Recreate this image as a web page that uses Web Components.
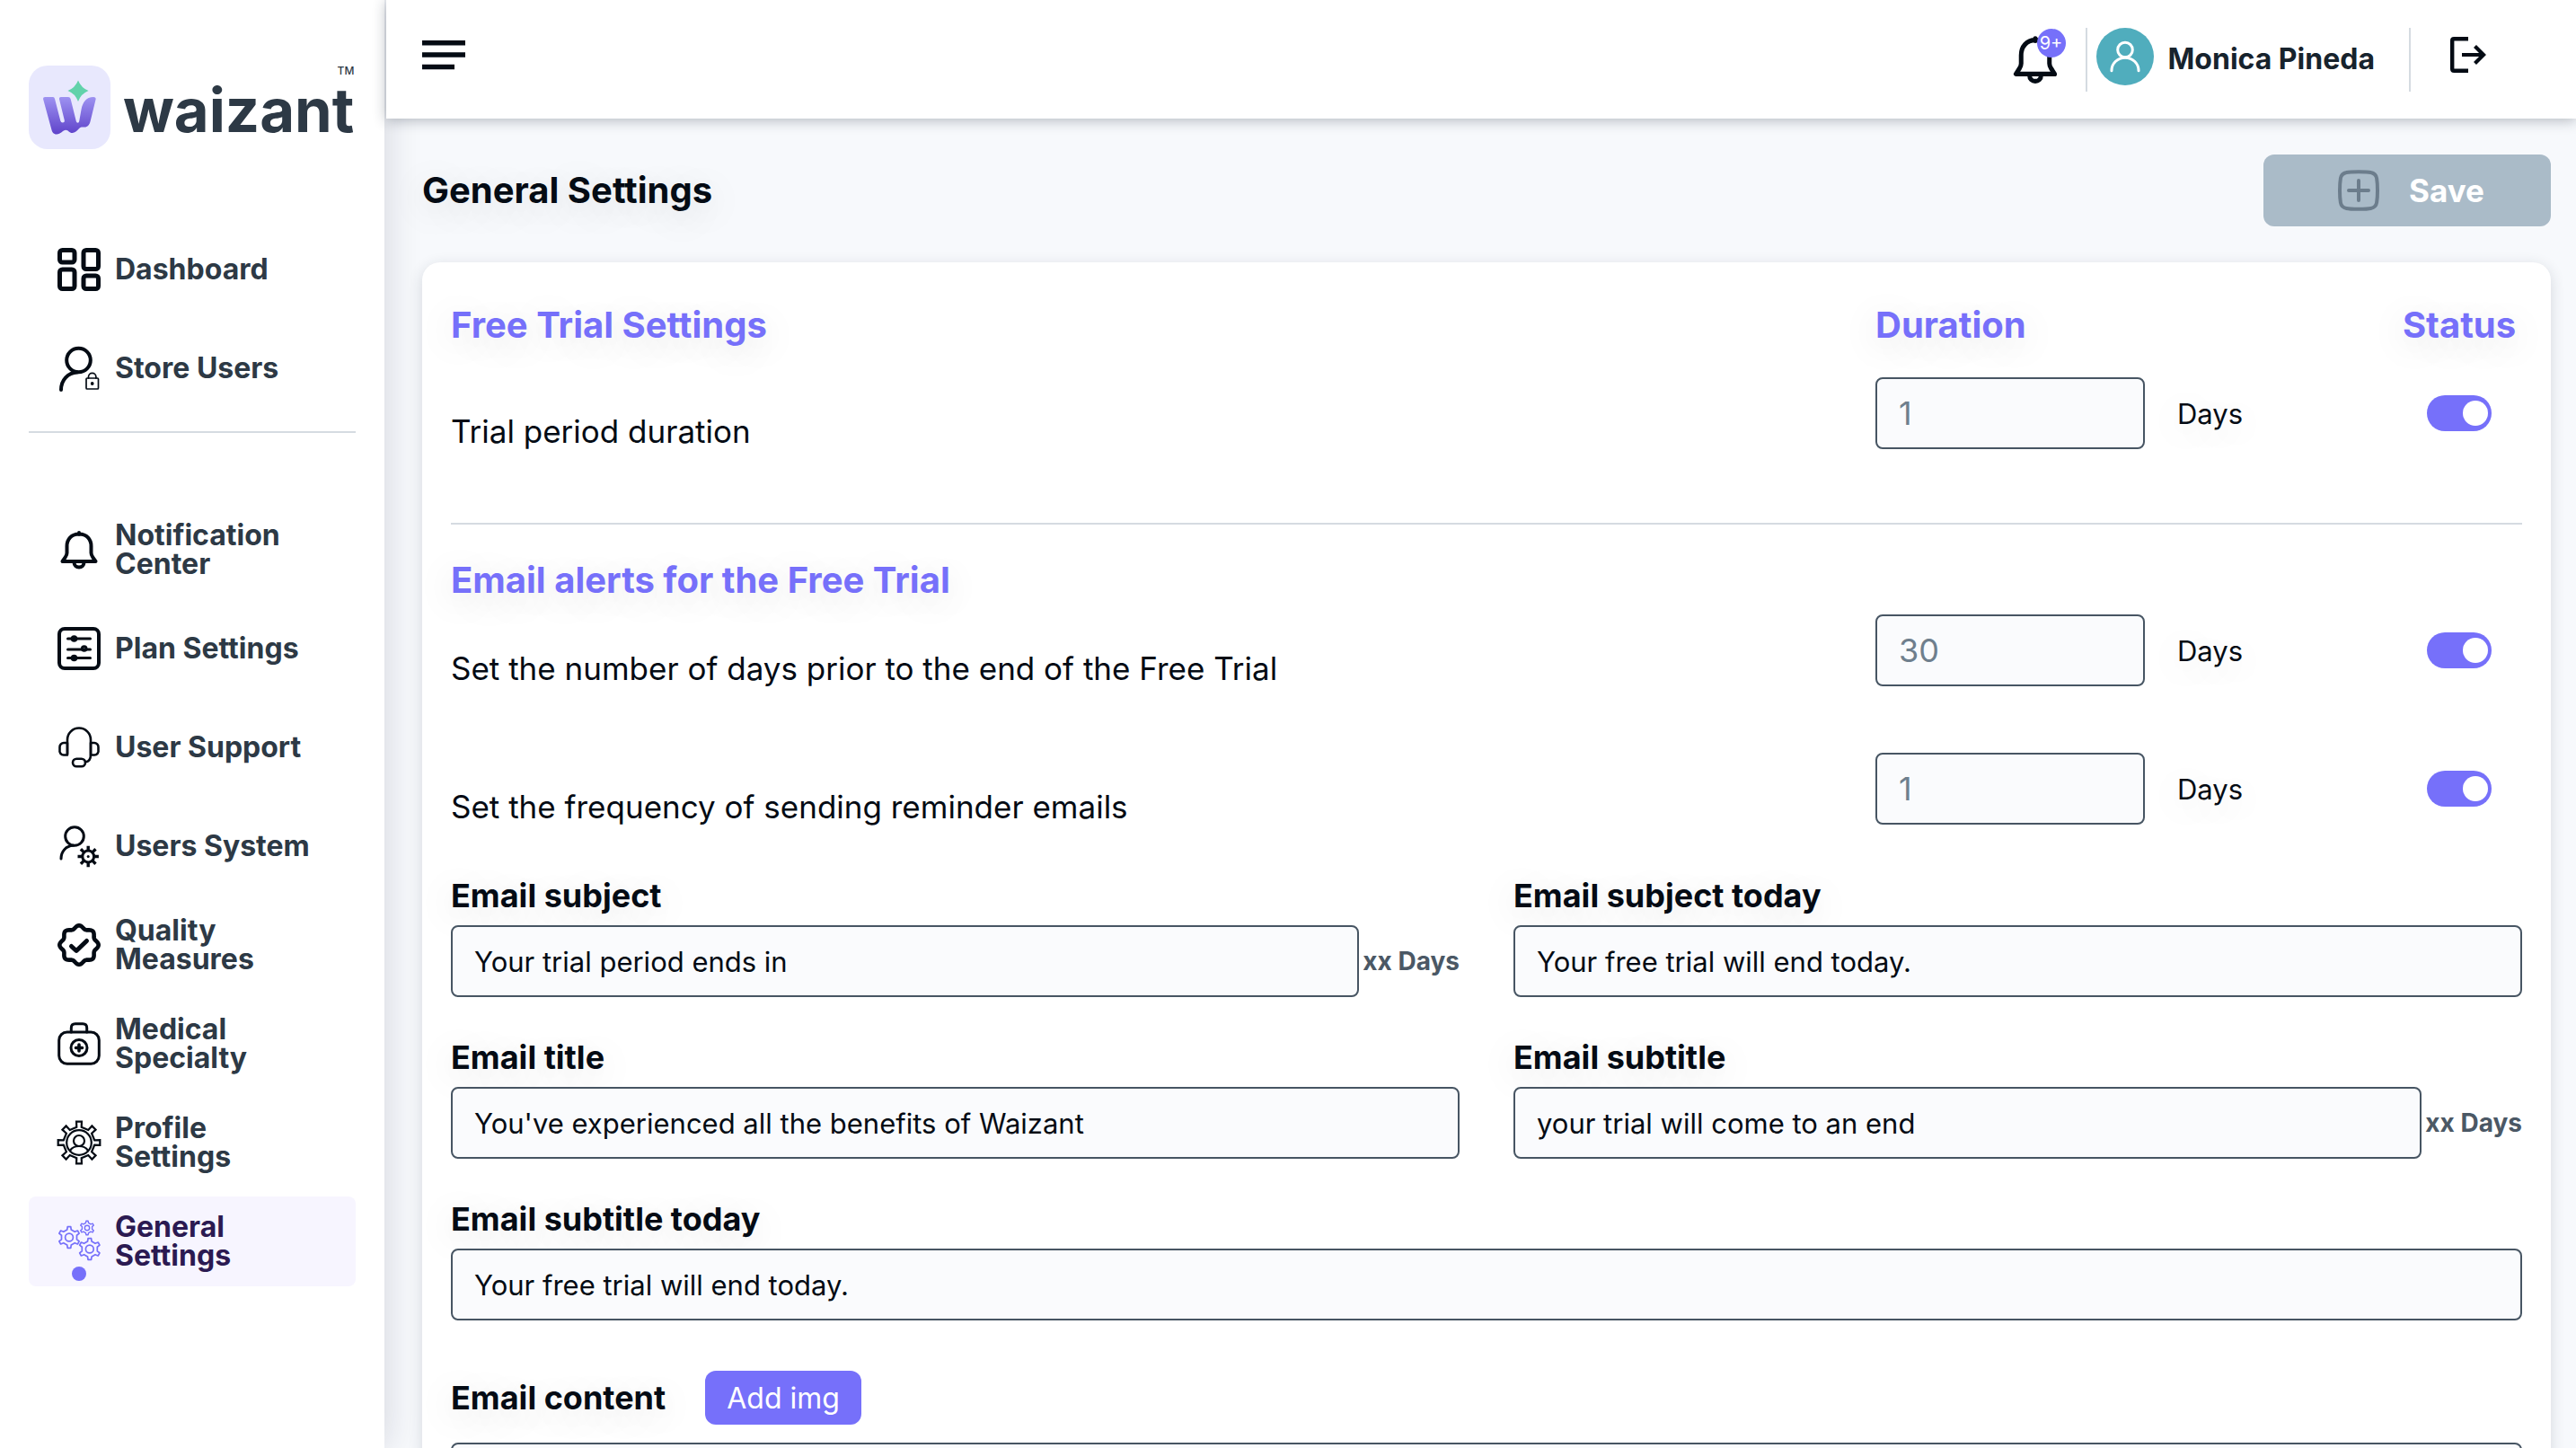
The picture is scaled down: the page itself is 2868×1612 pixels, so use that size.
<!DOCTYPE html>
<html lang="en">
<head>
<meta charset="utf-8">
<title>Waizant - General Settings</title>
<style>
  html, body { margin: 0; height: 100%; }
  body {
    font-family: Inter, "Liberation Sans", sans-serif;
    color: #040b14;
    background: #f7f9fc;
    --accent: #7670fa;
    --ink: #040b14;
    --slate: #2d3945;
    --line: #d5dbe1;
    --glow: 0 8px 40px rgba(0, 0, 0, .15);
  }
</style>
</head>
<body>
<waizant-app></waizant-app>

<script>
/* Outline of a cog: flat teeth around a centre point. */
function cog(cx, cy, teeth, outer, inner, top, foot) {
  const step = Math.PI * 2 / teeth, pts = [];
  for (let i = 0; i < teeth; i++) {
    const a = i * step - Math.PI / 2;
    [[inner, -foot], [outer, -top], [outer, top], [inner, foot]].forEach(([r, o]) => {
      pts.push((cx + r * Math.cos(a + o * step)).toFixed(2) + ' ' + (cy + r * Math.sin(a + o * step)).toFixed(2));
    });
  }
  return 'M' + pts.join('L') + 'Z';
}

/* Outline of a scalloped seal. */
function seal(cx, cy, waves, r, depth) {
  const pts = [];
  for (let i = 0; i < 96; i++) {
    const a = i / 96 * Math.PI * 2, k = r + depth * Math.cos(a * waves);
    pts.push((cx + k * Math.cos(a)).toFixed(2) + ' ' + (cy + k * Math.sin(a)).toFixed(2));
  }
  return 'M' + pts.join('L') + 'Z';
}

const bell = '<path d="M24 5v2M24 6.500C15.500 6.500 10.500 12.500 10.500 20v7.500c0 2-.8 3.400-1.800 4.800L5.500 37h37l-3.200-4.700c-1-1.400-1.800-2.800-1.800-4.800V20C37.500 12.500 32.500 6.500 24 6.500z"/><path d="M18.500 38c0 3.500 2.500 5.500 5.500 5.500s5.500-2 5.500-5.500"/>';

const ICONS = {
  dashboard: '<g stroke-width="5"><rect x="2.500" y="2.500" width="16.500" height="13.500" rx="3"/><rect x="29" y="2.500" width="16.500" height="21" rx="3"/><rect x="2.500" y="24" width="16.500" height="21.500" rx="3"/><rect x="29" y="31" width="16.500" height="14.500" rx="3"/></g>',
  store: '<g stroke-width="4"><circle cx="23.500" cy="15" r="13.300"/><path d="M4 48c0-11 7.500-19 18-19.500"/></g><g stroke-width="1.700"><rect x="32" y="35" width="13.500" height="12" rx="1"/><path d="M34.500 35v-1.500a4.200 4.200 0 0 1 8.400 0V35"/></g><circle cx="38.700" cy="41" r="1.900" fill="currentColor" stroke="none"/>',
  bell: '<g stroke-width="4">' + bell + '</g>',
  plan: '<rect x="2" y="2" width="44" height="44" rx="6" stroke-width="4"/><g stroke-width="3"><path d="M11.500 13h25M11.500 25h25M11.500 34.500h25"/></g><g stroke-width="3"><circle cx="18.500" cy="13" r="2.300"/><circle cx="29.700" cy="24" r="2.300"/><circle cx="18.500" cy="34.500" r="2.300"/></g>',
  support: '<g stroke-width="2.600"><path d="M11 31V15.500a13 13 0 0 1 26 0V31"/><path d="M11 19H7a4.500 4.500 0 0 0-4.500 4.500v3.500A4.500 4.500 0 0 0 7 32.500h4zM37 19h4a4.500 4.500 0 0 1 4.500 4.500v3.500a4.500 4.500 0 0 1-4.500 5.500h-4z"/><path d="M37 32c0 5-2 8-6 8.300"/><rect x="17" y="36.700" width="14" height="8.600" rx="4.300"/></g>',
  system: '<g stroke-width="3"><circle cx="19" cy="13" r="10.300"/><path d="M4 38c0-8.500 5.500-14.200 13.500-14.700"/></g><circle cx="34.200" cy="35.500" r="6.400" stroke-width="3"/><path stroke-width="3.400" stroke-linecap="butt" d="M34.200 28.500v-4.700M34.200 42.500v4.700M27.200 35.500h-4.700M41.200 35.500h4.700M29.300 30.600l-3.400-3.400M39.100 40.400l3.400 3.400M29.300 40.400l-3.400 3.400M39.100 30.600l3.400-3.400"/><circle cx="34.200" cy="35.500" r="1.500" fill="currentColor" stroke="none"/>',
  quality: '<path stroke-width="4.600" d="' + seal(24, 24, 8, 20, 1.7) + '"/><path stroke-width="5" d="M15.500 25.500l5.500 5 11.500-11"/>',
  medical: '<g stroke-width="3"><rect x="1.700" y="11" width="44.600" height="35.300" rx="9"/><path d="M15.300 11V6.500c0-3 1.500-4.700 4.500-4.700h8.400c3 0 4.500 1.700 4.500 4.700V11"/><circle cx="24" cy="28.500" r="9"/></g><path stroke-width="3.600" d="M24 25v7M20.500 28.500h7"/>',
  profile: '<g stroke-width="2.200" stroke-linejoin="miter"><path d="' + cog(24, 24, 8, 23.5, 17.4, .16, .2) + '"/><circle cx="24" cy="24" r="13.800"/><circle cx="24" cy="22" r="6"/><path d="M14 33c2-3.500 5.500-5 10-5s8 1.500 10 5"/></g>',
  general: '<g stroke-width="1.700"><path d="' + cog(13, 19.5, 6, 12, 8.8, .14, .25) + '"/><circle cx="13" cy="19.500" r="4.400"/><path d="' + cog(35.8, 32.5, 6, 12, 8.800, .14, .25) + '"/><circle cx="35.800" cy="32.500" r="4.400"/></g><g stroke-width="1.400"><path d="' + cog(33, 9, 6, 7.8, 5.8, .14, .25) + '"/><circle cx="33" cy="9" r="2.700"/></g>',
  menu: '<path stroke="none" fill="currentColor" d="M0 8h48v5.500H0zM0 21.300h48v5.500H0zM0 34.700h36v5.500H0z"/>',
  alerts: '<g stroke-width="4.300" transform="translate(0 -2) scale(1 1.060)">' + bell + '</g>',
  person: '<g stroke-width="3.800"><circle cx="24" cy="14.500" r="10.500"/><path d="M5 44C5 34 13 25.500 24 25.500S43 34 43 44"/></g>',
  logout: '<path stroke-width="4.400" stroke-linecap="butt" stroke-linejoin="round" d="M24 6.200H8.200q-2 0-2 2v31.600q0 2 2 2H24"/><path stroke-width="4" stroke-linecap="butt" stroke-linejoin="miter" d="M17 24h24"/><path stroke-width="4.200" stroke-linecap="butt" stroke-linejoin="miter" d="M31.500 14.500l9.500 9.500-9.500 9.500"/>',
  plus: '<path stroke-width="4" d="M24 3.200c6 0 11 .2 13.500.8 4 .8 6 2.800 6.600 6.500.5 3 .9 8 .9 13.500s-.4 10.500-.9 13.500c-.6 3.700-2.600 5.700-6.600 6.500-2.500.6-7.500.8-13.500.8s-11-.2-13.500-.8c-4-.8-6-2.800-6.600-6.500C3.400 34.500 3 29.500 3 24s.4-10.500.9-13.500C4.500 6.800 6.500 4.800 10.500 4c2.500-.6 7.500-.8 13.500-.8z"/><path stroke-width="4" d="M24 13v22M13 24h22"/>'
};

function define(name, html, setup) {
  const template = document.createElement('template');
  template.innerHTML = '<style>*{box-sizing:border-box}</style>' + html;
  customElements.define(name, class extends HTMLElement {
    connectedCallback() {
      if (this.shadowRoot) return;
      this.attachShadow({ mode: 'open' }).append(template.content.cloneNode(true));
      if (setup) setup(this.shadowRoot, this);
    }
  });
}

define('ui-icon', `
<style>
  :host { display: block; width: 48px; height: 48px; flex: none; }
  svg { display: block; width: 100%; height: 100%; overflow: visible; }
</style>
<svg viewBox="0 0 48 48" fill="none" stroke="currentColor" stroke-linecap="round" stroke-linejoin="round" aria-hidden="true"></svg>`,
(root, el) => { root.querySelector('svg').innerHTML = ICONS[el.getAttribute('name')]; });

define('brand-logo', `
<style>
  :host { display: block; }
  a { display: flex; gap: 13px; height: 94px; color: var(--slate); text-decoration: none; }
  svg { width: 92px; height: 94px; flex: none; }
  .name { display: flex; flex-direction: column; align-items: flex-end; }
  sup { font-size: 12px; line-height: 12px; font-weight: 500; }
  b { font-size: 67px; line-height: 76px; font-weight: 700; }
</style>
<a href="#">
  <svg viewBox="0 0 92 94" aria-hidden="true">
    <defs><linearGradient id="fade" x1="0" y1="0" x2="0" y2="1"><stop offset="0" stop-color="#9d92f1"/><stop offset="1" stop-color="#5f43ca"/></linearGradient></defs>
    <rect width="91" height="93" rx="21" fill="#e8e8fd"/>
    <path fill="url(#fade)" d="M16 37q0-2 2-2h9q1.500 0 2 2l6.300 24.500q.5 2 2.400 2 2.400 0 2.100-2.500L34 37.500q-.4-2.500 1.800-2.500H44q2 0 2.600 2l6.200 25q.4 1.700 1.800 1.700 1.300 0 1.600-1.700l2.300-13C60 41 64 35 72 35q3 0 2.600 2.500l-6 24.500c-1 4-3 6.500-6.500 6.500-2.600 0-4.100-.5-6 1.500-2.600 2.700-4.600 5-7.600 5-3.500 0-4.300-3.300-7.300-3.300-3.200 0-5.700 4.800-10.200 4.800-3.500 0-5-2.500-5.700-5.500z"/>
    <path fill="#61d2aa" d="M55 16.500q3.500 8.500 11.500 11.500-8 3-11.500 12-3.500-9-11.500-12 8-3 11.500-11.500z"/>
  </svg>
  <span class="name"><sup>TM</sup><b>waizant</b></span>
</a>`);

define('nav-item', `
<style>
  :host { display: block; }
  a {
    display: flex; align-items: center; gap: 16px; position: relative;
    height: 100px; padding: 0 44px 0 32px; border-radius: 8px;
    color: var(--slate); text-decoration: none;
    font-size: 32px; line-height: 32px; font-weight: 700;
  }
  ui-icon { color: var(--ink); }
  :host([active]) a { background: #f7f5ff; color: #2b1a52; }
  :host([active]) ui-icon { color: var(--accent); }
  :host([active]) a::after {
    content: ""; position: absolute; left: 48px; bottom: 6px;
    width: 16px; height: 16px; border-radius: 50%; background: var(--accent);
  }
</style>
<a href="#"><ui-icon></ui-icon><span><slot></slot></span></a>`,
(root, el) => {
  const icon = document.createElement('ui-icon');
  icon.setAttribute('name', el.getAttribute('icon'));
  root.querySelector('ui-icon').replaceWith(icon);
  if (el.hasAttribute('active')) root.querySelector('a').setAttribute('aria-current', 'page');
});
</script>

<script>
define('side-bar', `
<style>
  :host { display: flex; flex-direction: column; background: #fff; padding: 73px 32px 0; box-shadow: 0 0 40px rgba(20, 20, 50, .16); }
  nav { display: flex; flex-direction: column; gap: 10px; margin-top: 83px; }
  hr { width: 100%; height: 2px; border: 0; margin: 10px 0 70px; background: var(--line); }
</style>
<brand-logo></brand-logo>
<nav aria-label="Main">
  <nav-item icon="dashboard">Dashboard</nav-item>
  <nav-item icon="store">Store Users</nav-item>
  <hr>
  <nav-item icon="bell">Notification Center</nav-item>
  <nav-item icon="plan">Plan Settings</nav-item>
  <nav-item icon="support">User Support</nav-item>
  <nav-item icon="system">Users System</nav-item>
  <nav-item icon="quality">Quality Measures</nav-item>
  <nav-item icon="medical">Medical Specialty</nav-item>
  <nav-item icon="profile">Profile Settings</nav-item>
  <nav-item icon="general" active>General Settings</nav-item>
</nav>`);

define('top-bar', `
<style>
  :host {
    display: flex; align-items: flex-start; justify-content: space-between;
    height: 132px; padding: 31px 96px 0 40px; background: #fff;
    box-shadow: 0 2px 14px rgba(30, 45, 60, .32);
  }
  button { display: block; position: relative; border: 0; padding: 0; background: none; color: var(--ink); cursor: pointer; }
  .menu { margin-top: 6px; }
  .right { display: flex; align-items: flex-start; }
  .bell { margin-right: 28px; }
  .bell ui-icon { width: 56px; height: 56px; margin-top: 8px; }
  .badge {
    position: absolute; left: 30px; top: 1px; width: 32px; height: 32px; border-radius: 50%;
    background: var(--accent); color: #fff; font: 400 20px/32px Inter, sans-serif; text-align: center;
  }
  .rule { width: 2px; height: 71px; background: var(--line); }
  .avatar { display: grid; place-items: center; width: 64px; height: 64px; border-radius: 50%; background: #50adbd; color: #fff; }
  .avatar ui-icon { width: 38px; height: 38px; }
  .user { display: flex; align-items: flex-start; gap: 16px; padding: 0 38px 0 10px; }
  .user b { font-size: 32px; line-height: 70px; color: #17232d; }
  .exit { margin: 6px 0 0 40px; }
</style>
<button class="menu" aria-label="Toggle menu"><ui-icon name="menu"></ui-icon></button>
<div class="right">
  <button class="bell" aria-label="Notifications"><ui-icon name="alerts"></ui-icon><span class="badge">9+</span></button>
  <span class="rule"></span>
  <div class="user"><span class="avatar"><ui-icon name="person"></ui-icon></span><b>Monica Pineda</b></div>
  <span class="rule"></span>
  <button class="exit" aria-label="Log out"><ui-icon name="logout"></ui-icon></button>
</div>`);

define('page-head', `
<style>
  :host { display: flex; align-items: center; justify-content: space-between; height: 80px; }
  h1 { margin: 0; font-size: 40px; line-height: 52px; text-shadow: var(--glow); }
  button {
    display: flex; align-items: center; justify-content: center; gap: 32px;
    width: 320px; height: 80px; border: 0; border-radius: 12px; padding: 0 0 0 8px;
    background: #aabbc8; color: #fff; font: 700 35px/44px Inter, sans-serif;
  }
  ui-icon { color: #6c7d8c; }
</style>
<h1><slot></slot></h1>
<button type="button" disabled><ui-icon name="plus"></ui-icon>Save</button>`);

define('section-title', `
<style>
  :host { display: block; }
  h2 { margin: 0; font-size: 40px; line-height: 52px; color: var(--accent); text-shadow: var(--glow); }
</style>
<h2><slot></slot></h2>`);

define('setting-row', `
<style>
  :host { display: grid; grid-template-columns: 1fr 580px 140px; }
  .text { padding-top: 40px; font-size: 35px; line-height: 40px; }
  .amount { display: flex; align-items: center; gap: 36px; }
  .amount input {
    width: 300px; height: 80px; border: 2px solid #475563; border-radius: 8px; padding: 0 24px;
    background: #fafbfd; color: #6f7f8d; font: 400 36px Inter, sans-serif;
  }
  .amount span { font-size: 31px; text-shadow: var(--glow); }
  .switch {
    appearance: none; place-self: center; display: flex; justify-content: flex-end;
    width: 72px; height: 40px; margin: 0; padding: 6px 4px; border-radius: 20px; background: var(--accent);
  }
  .switch::before { content: ""; width: 28px; height: 28px; border-radius: 50%; background: #fff; }
  .switch:not(:checked) { justify-content: flex-start; background: #aabbc8; }
</style>
<label class="text" for="amount"><slot></slot></label>
<div class="amount"><input id="amount" type="text" inputmode="numeric"><span>Days</span></div>
<input class="switch" type="checkbox" role="switch" aria-label="Status" checked>`,
(root, el) => { root.querySelector('#amount').value = el.getAttribute('value'); });

define('text-field', `
<style>
  :host { display: flex; flex-direction: column; gap: 10px; }
  label { align-self: flex-start; font-size: 36px; line-height: 46px; font-weight: 700; text-shadow: var(--glow); }
  .box { display: flex; align-items: center; gap: 4px; }
  input {
    flex: 1; min-width: 0; height: 80px; border: 2px solid #475563; border-radius: 8px; padding: 0 24px;
    background: #fafbfd; color: var(--ink); font: 400 31px Inter, sans-serif;
  }
  .suffix { font-size: 28px; font-weight: 700; color: #4b5865; }
  .suffix:empty { display: none; }
</style>
<label for="field"><slot></slot></label>
<div class="box"><input id="field" type="text"><span class="suffix"></span></div>`,
(root, el) => {
  root.querySelector('#field').value = el.getAttribute('value');
  root.querySelector('.suffix').textContent = el.getAttribute('suffix') || '';
});

define('content-field', `
<style>
  :host { display: flex; flex-direction: column; gap: 20px; }
  .head { display: flex; align-items: center; gap: 44px; }
  label { font-size: 36px; line-height: 46px; font-weight: 700; text-shadow: var(--glow); }
  button { height: 60px; padding: 0 24px; border: 0; border-radius: 12px; background: var(--accent); color: #fff; font: 400 32px Inter, sans-serif; }
  textarea { width: 100%; height: 360px; border: 2px solid #475563; border-radius: 8px; padding: 24px; background: #fafbfd; resize: none; }
</style>
<div class="head"><label for="content">Email content</label><button type="button">Add img</button></div>
<textarea id="content"></textarea>`);

define('settings-card', `
<style>
  :host { display: block; background: #fff; border-radius: 20px; padding: 44px 32px; box-shadow: 0 4px 16px rgba(30, 45, 60, .16); }
  .heads { display: grid; grid-template-columns: 1fr 580px 140px; margin-bottom: 32px; }
  .heads > :last-child { justify-self: center; }
  hr { height: 2px; border: 0; margin: 82px 0 36px; background: var(--line); }
  .rows { display: flex; flex-direction: column; gap: 74px; margin: 12px 0 56px; }
  .fields { display: grid; grid-template-columns: 1fr 1fr; gap: 44px 60px; margin-bottom: 56px; }
  .wide { grid-column: 1 / -1; }
</style>
<div class="heads"><section-title>Free Trial Settings</section-title><section-title>Duration</section-title><section-title>Status</section-title></div>
<setting-row value="1">Trial period duration</setting-row>
<hr>
<section-title>Email alerts for the Free Trial</section-title>
<div class="rows">
  <setting-row value="30">Set the number of days prior to the end of the Free Trial</setting-row>
  <setting-row value="1">Set the frequency of sending reminder emails</setting-row>
</div>
<div class="fields">
  <text-field value="Your trial period ends in" suffix="xx Days">Email subject</text-field>
  <text-field value="Your free trial will end today.">Email subject today</text-field>
  <text-field value="You've experienced all the benefits of Waizant">Email title</text-field>
  <text-field value="your trial will come to an end" suffix="xx Days">Email subtitle</text-field>
  <text-field class="wide" value="Your free trial will end today.">Email subtitle today</text-field>
</div>
<content-field></content-field>`);

define('waizant-app', `
<style>
  :host { display: grid; grid-template-columns: 428px 1fr; height: 100vh; overflow: hidden; }
  side-bar { position: relative; z-index: 1; }
  .page { display: flex; flex-direction: column; min-width: 0; min-height: 0; }
  top-bar { flex: none; margin-left: 2px; position: relative; z-index: 2; }
  main { flex: 1; min-height: 0; overflow: auto; scrollbar-width: none; padding: 40px 28px 40px 42px; }
  settings-card { margin-top: 40px; }
</style>
<side-bar></side-bar>
<div class="page">
  <top-bar></top-bar>
  <main><page-head>General Settings</page-head><settings-card></settings-card></main>
</div>`);
</script>
</body>
</html>
